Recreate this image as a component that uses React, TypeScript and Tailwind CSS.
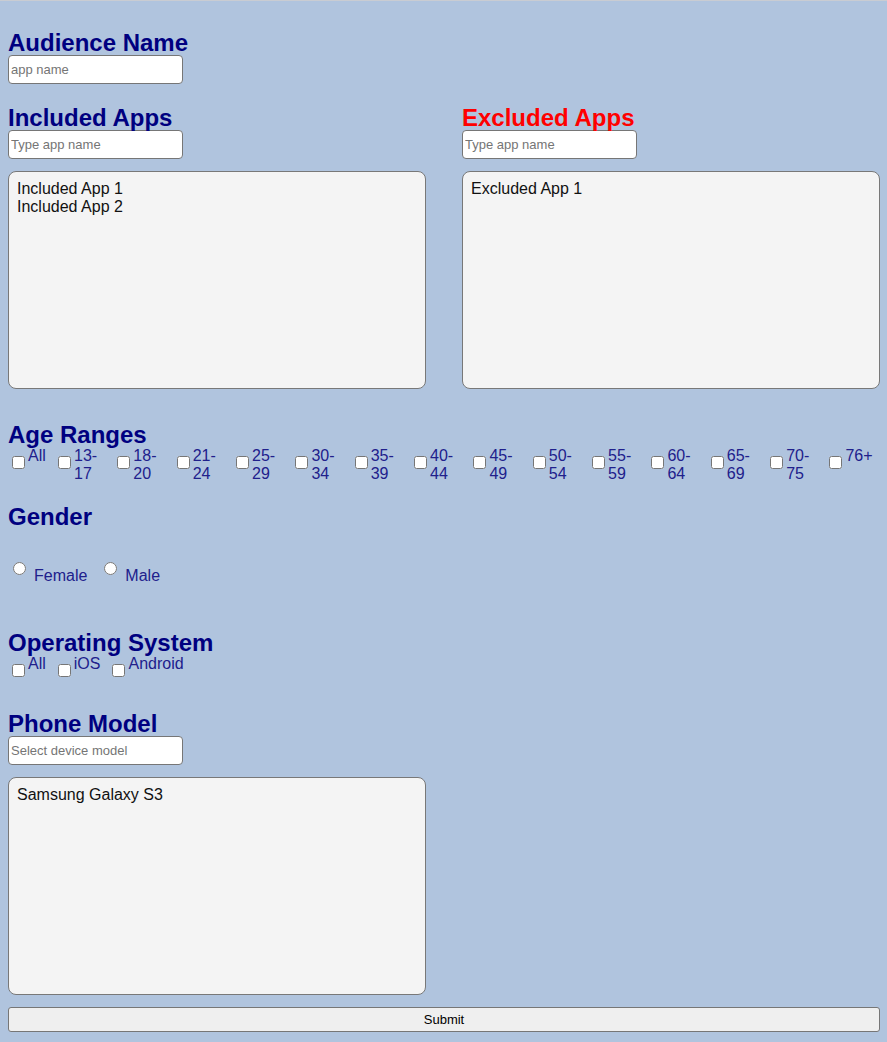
import React from 'react';

const ages = ['13-17', '18-20', '21-24', '25-29', '30-34', '35-39', '40-44', '45-49', '50-54', '55-59', '60-64', '65-69', '70-75', '76+'];

const Heading: React.FC<{ children: React.ReactNode; red?: boolean; className?: string }> = ({ children, red, className = '' }) => (
  <h2 className={`text-[24px] leading-[24px] font-bold ${red ? 'text-[#ff0000]' : 'text-[#000080]'} ${className}`}>{children}</h2>
);

const TextBox: React.FC<{ placeholder: string }> = ({ placeholder }) => (
  <input
    type="text"
    placeholder={placeholder}
    className="block w-[175px] h-[29px] bg-white border border-[#767676] rounded-[4px] pl-[2px] text-[13px] text-black placeholder:text-[#757575] outline-none"
  />
);

const ListBox: React.FC<{ items: string[] }> = ({ items }) => (
  <div className="mt-3 h-[218px] w-[418px] bg-[#f4f4f4] border border-[#787878] rounded-[8px] pt-[8px] px-2 text-[16px] leading-[18px] text-[#111]">
    {items.map(i => <div key={i}>{i}</div>)}
  </div>
);

const Check: React.FC<{ label: string; width?: string }> = ({ label, width }) => (
  <label className={`flex items-start shrink-0 ${width ?? ''}`}>
    <input type="checkbox" className="m-0 ml-1 mr-[3px] mt-[9px] w-[13px] h-[13px] shrink-0" />
    <span className="w-[28px] text-[16px] leading-[18px] text-[#20208c]">{label}</span>
  </label>
);

const App: React.FC = () => {
  return (
    <div className="min-h-[1042px] bg-[#b0c4de] border-t border-[#c9ccd2] pl-2 pr-[7px] pt-[30px] font-['Liberation_Sans',Arial,sans-serif]">
      <Heading>Audience Name</Heading>
      <TextBox placeholder="app name" />

      <div className="grid grid-cols-2 gap-9 mt-[22px]">
        <div>
          <Heading>Included Apps</Heading>
          <TextBox placeholder="Type app name" />
          <ListBox items={['Included App 1', 'Included App 2']} />
        </div>
        <div>
          <Heading red>Excluded Apps</Heading>
          <TextBox placeholder="Type app name" />
          <ListBox items={['Excluded App 1']} />
        </div>
      </div>

      <Heading className="mt-[34px]">Age Ranges</Heading>
      <div className="flex h-[36px]">
        <Check label="All" width="w-[46px]" />
        {ages.map(a => <Check key={a} label={a} width="w-[59.35px]" />)}
      </div>

      <Heading className="mt-[22px]">Gender</Heading>
      <div className="flex items-start mt-[33px] h-[22px] text-[16px] leading-[18px] text-[#20208c]">
        <input type="radio" name="gender" className="m-0 ml-[5px] mr-[3px] w-[13px] h-[13px] shrink-0" />
        <span className="mt-[5px] pl-[5px]">Female</span>
        <input type="radio" name="gender" className="m-0 ml-[17px] mr-[3px] w-[13px] h-[13px] shrink-0" />
        <span className="mt-[5px] pl-[5px]">Male</span>
      </div>

      <Heading className="mt-[47px]">Operating System</Heading>
      <div className="flex gap-2 h-[22px]">
        {['All', 'iOS', 'Android'].map(o => (
          <label key={o} className="flex items-start">
            <input type="checkbox" className="m-0 ml-1 mr-[3px] mt-[9px] w-[13px] h-[13px] shrink-0" />
            <span className="text-[16px] leading-[18px] text-[#20208c]">{o}</span>
          </label>
        ))}
      </div>

      <Heading className="mt-[35px]">Phone Model</Heading>
      <TextBox placeholder="Select device model" />
      <ListBox items={['Samsung Galaxy S3']} />

      <button className="block mt-3 w-full h-[25px] bg-[#efefef] border border-[#767676] rounded-[3px] text-[13px] text-black">
        Submit
      </button>
    </div>
  );
};

export default App;
